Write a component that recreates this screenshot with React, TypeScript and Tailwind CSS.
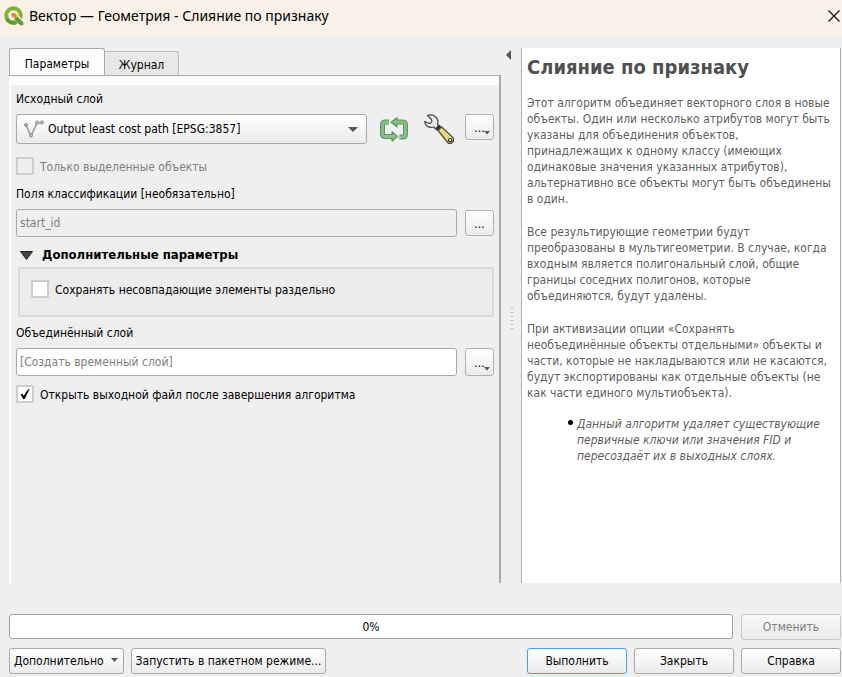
import type { ButtonHTMLAttributes, ReactNode } from 'react'
import clsx from 'clsx'

const buttonBase =
  'rounded-[3px] border bg-linear-to-b from-white to-[#ebebeb] whitespace-nowrap text-center'

function PushButton({
  className,
  primary,
  children,
  ...rest
}: ButtonHTMLAttributes<HTMLButtonElement> & { primary?: boolean; children: ReactNode }) {
  return (
    <button
      type="button"
      className={clsx(
        buttonBase,
        'h-[26px] shrink-0 disabled:border-[#c8c8c8] disabled:from-[#f8f8f8] disabled:text-[#808080]',
        primary ? 'border-[#3fa3ee] to-[#e8f0f7]' : 'border-[#a9a9a9]',
        className,
      )}
      {...rest}
    >
      {children}
    </button>
  )
}

function MoreButton({ label, menu, tall }: { label: string; menu?: boolean; tall?: boolean }) {
  return (
    <button
      type="button"
      aria-label={label}
      className={clsx(
        buttonBase,
        'relative w-[29px] shrink-0 border-[#b0b0b0] pt-[2px]',
        tall ? 'h-[28px]' : 'h-[26px]',
      )}
    >
      ...
      {menu && (
        <svg viewBox="0 0 6 4" className="absolute right-[3px] bottom-[4px] h-[4px] w-[6px]">
          <path d="M0 0h6L3 3.6z" fill="#555" />
        </svg>
      )}
    </button>
  )
}

function CheckBox({
  id,
  label,
  checked,
  disabled,
}: {
  id: string
  label: string
  checked?: boolean
  disabled?: boolean
}) {
  return (
    <div className="flex items-center gap-[6px]">
      <span className="relative flex shrink-0">
        <input
          id={id}
          type="checkbox"
          defaultChecked={checked}
          disabled={disabled}
          className="peer size-[18px] appearance-none border-2 border-[#cdcdcd] bg-white disabled:bg-[#efefef]"
        />
        <svg
          viewBox="0 0 18 18"
          className="pointer-events-none absolute inset-0 hidden size-[18px] peer-checked:block"
        >
          <path d="M4.500 9.500l1.800-.8 1.500 2.300q2-4.500 5-7l.8.500q-2.600 4-4.600 9.300l-1.600.5z" fill="#000" />
        </svg>
      </span>
      <label htmlFor={id} className={clsx('pt-[2px]', disabled ? 'text-[#808080]' : 'text-black')}>
        {label}
      </label>
    </div>
  )
}

function QgisLogo() {
  return (
    <svg viewBox="0 0 20 20" className="size-[20px]" aria-hidden="true">
      <circle cx="9.5" cy="9.500" r="7.300" fill="none" stroke="#84b03a" strokeWidth="4" />
      <path d="M2.800 12.500a7.300 7.300 0 0 0 8.500 4" fill="none" stroke="#5f9a34" strokeWidth="4" />
      <path d="M11 9.500h3.500L21 16v4h-4.500L10 13z" fill="#f9f1e7" />
      <path d="M10.500 10.500h3l5.800 6v2.800h-3L10.500 13.500z" fill="#5b9a38" />
      <path d="M7.200 7h4.300l1.800 1.700v2.200l-2 .8-2.200 0L7.200 10z" fill="#f3b04a" />
      <path d="M7.800 7.600h3l1.500 3.400-3.600-.8z" fill="#ee7022" />
    </svg>
  )
}

function LineLayerIcon() {
  return (
    <svg viewBox="0 0 20 18" className="h-[18px] w-[20px]" aria-hidden="true">
      <path d="M2 5l5 11 6-13h5" fill="none" stroke="#9a9a9a" strokeWidth="1.600" />
      <g fill="#c4c4c4" stroke="#8a8a8a">
        <circle cx="2" cy="5" r="1.500" />
        <circle cx="7" cy="15.500" r="1.500" />
        <circle cx="13" cy="2.500" r="1.500" />
        <circle cx="18" cy="2.500" r="1.500" />
      </g>
    </svg>
  )
}

function IterateIcon() {
  const loop = 'M9 5H5.500Q2.500 5 2.500 8v8.500q0 3 3 3H13M19.500 20h3q3 0 3-3V8q0-3-3-3H15'
  return (
    <svg viewBox="0 0 28 25" className="h-[25px] w-[28px]" aria-hidden="true">
      <path d={loop} fill="none" stroke="#5a9460" strokeWidth="5" />
      <path
        d="M17 .8L11 5.200l6 4.600zM12 14.800l5.500 4.600L12 24.200z"
        fill="#8abf8a"
        stroke="#5a9460"
        strokeWidth="1.200"
        strokeLinejoin="round"
      />
      <path d={loop} fill="none" stroke="#8abf8a" strokeWidth="2.800" />
    </svg>
  )
}

function WrenchIcon() {
  return (
    <svg viewBox="0 0 30 30" className="size-[30px]" aria-hidden="true">
      <path
        d="M3.500 1.500Q7 0 10.500 2q3.500 2.200 3.500 6.500l-.5 2 2.500 2.500-3 3-3.500-3q-3.500 1-6-.5Q1 11 .600 7.500l4 1.800q2 .5 3-1.300.8-2-1-3.500z"
        fill="#ebebeb"
        stroke="#444"
        strokeWidth="1.200"
        strokeLinejoin="round"
      />
      <path d="M11.500 14l3.500-3.500 2.500 2.500-3.500 3.500z" fill="#333" />
      <path d="M14 16.500l3.500-3.700L29.500 24v3L27 29.500h-2.500z" fill="#eed77c" stroke="#444" strokeWidth="1.200" />
      <circle cx="26.200" cy="26.200" r="1.700" fill="#fff" stroke="#333" strokeWidth="1.200" />
    </svg>
  )
}

export default function App() {
  return (
    <div className="flex min-h-screen flex-col bg-[#efefef] font-['DejaVu_Sans_Condensed','DejaVu_Sans',sans-serif] text-[12px] leading-[16px] text-black">
      <header className="flex h-[34px] items-center gap-[5px] bg-[#f9f1e7] pb-[2px] pl-[4px]">
        <QgisLogo />
        <h1 className="flex-1 font-['Noto_Sans','Open_Sans',sans-serif] text-[14px]">
          Вектор — Геометрия - Слияние по признаку
        </h1>
        <button type="button" aria-label="Закрыть окно" className="pr-[2px]">
          <svg viewBox="0 0 12 12" className="size-[12px]">
            <path d="M.5.5l11 11m0-11l-11 11" stroke="#111" strokeWidth="1.200" />
          </svg>
        </button>
      </header>

      <main className="flex flex-1 pt-[14px] pr-px pl-[9px]">
        <section className="flex flex-1 flex-col">
          <div role="tablist" className="flex items-end">
            <button
              type="button"
              role="tab"
              aria-selected="true"
              className="-mb-px h-[28px] w-[96px] rounded-t-[3px] border border-b-0 border-[#a9a9a9] bg-[#fcfcfc] pt-[2px]"
            >
              Параметры
            </button>
            <button
              type="button"
              role="tab"
              aria-selected="false"
              className="h-[24px] w-[74px] rounded-tr-[3px] border border-b-0 border-l-0 border-[#bdbdbd] bg-[#e8e8e8] pt-[2px]"
            >
              Журнал
            </button>
          </div>

          <div role="tabpanel" className="flex-1 border-t border-r-2 border-[#a9a9a9] bg-[#fcfcfc] pt-[9px] pl-[2px]">
            <form className="flex h-full flex-col bg-[#efefef] pt-[6px] pr-[5px] pl-[5px]">
              <label htmlFor="source">Исходный слой</label>
              <div className="mt-[7px] flex">
                <div className="relative flex-1">
                  <select
                    id="source"
                    className={clsx(buttonBase, 'h-[30px] w-full appearance-none border-[#a9a9a9] pl-[31px] text-left')}
                  >
                    <option>Output least cost path [EPSG:3857]</option>
                  </select>
                  <span className="pointer-events-none absolute top-[6px] left-[8px]">
                    <LineLayerIcon />
                  </span>
                  <svg viewBox="0 0 10 5" className="pointer-events-none absolute top-[13px] right-[9px] h-[5px] w-[10px]">
                    <path d="M0 0h10L5 5z" fill="#555" />
                  </svg>
                </div>
                <button type="button" aria-label="Перебрать объекты" className="ml-[13px]">
                  <IterateIcon />
                </button>
                <button type="button" aria-label="Настройки" className="mr-[11px] ml-[16px]">
                  <WrenchIcon />
                </button>
                <MoreButton label="Выбрать слой" menu />
              </div>

              <div className="mt-[13px]">
                <CheckBox id="selected" label="Только выделенные объекты" disabled />
              </div>

              <label htmlFor="fields" className="mt-[11px]">
                Поля классификации [необязательно]
              </label>
              <div className="mt-[7px] flex items-center gap-[8px]">
                <input
                  id="fields"
                  readOnly
                  value="start_id"
                  className="h-[28px] min-w-0 flex-1 rounded-[3px] border border-[#a9a9a9] bg-[#efefef] px-[3px] text-[#808080]"
                />
                <MoreButton label="Выбрать поля" />
              </div>

              <h2 className="mt-[10px]">
                <button type="button" className="flex items-center gap-[9px] pl-[4px] text-[13px] leading-[16px] font-bold">
                  <svg viewBox="0 0 13 9" className="h-[9px] w-[13px]">
                    <path d="M.5.5h12l-6 8z" fill="#444" stroke="#222" />
                  </svg>
                  Дополнительные параметры
                </button>
              </h2>
              <div className="mt-[4px] ml-[2px] h-[50px] rounded-[2px] border-2 border-[#d9d9d9] bg-[#ececec] pt-[11px] pl-[11px]">
                <CheckBox id="disjoint" label="Сохранять несовпадающие элементы раздельно" />
              </div>

              <label htmlFor="output" className="mt-[8px]">
                Объединённый слой
              </label>
              <div className="mt-[7px] flex gap-[8px]">
                <input
                  id="output"
                  placeholder="[Создать временный слой]"
                  className="h-[28px] min-w-0 flex-1 rounded-[3px] border border-[#a9a9a9] bg-white px-[3px] placeholder:text-[#808080]"
                />
                <MoreButton label="Выбрать файл" menu tall />
              </div>

              <div className="mt-[9px]">
                <CheckBox id="open" label="Открыть выходной файл после завершения алгоритма" checked />
              </div>
            </form>
          </div>
        </section>

        <div className="relative w-[20px] shrink-0">
          <button type="button" aria-label="Скрыть справку" className="absolute top-[2px] left-[5px]">
            <svg viewBox="0 0 5 10" className="h-[10px] w-[5px]">
              <path d="M5 0v10L0 5z" fill="#555" />
            </svg>
          </button>
          <div className="absolute top-1/2 left-[10px] h-[21px] w-[2px] -translate-y-2 bg-[repeating-linear-gradient(to_bottom,#b8b8b8_0_1px,transparent_1px_4px)]" />
        </div>

        <aside className="w-[320px] shrink-0 border-x border-[#b0b0b0] bg-white pr-[8px] pl-[5px] text-[#5f5f5f]">
          <h2 className="pt-[6px] text-[20px] leading-[26px] font-bold text-[#505050]">Слияние по признаку</h2>
          <p className="mt-[15px]">
            Этот алгоритм объединяет векторного слоя в новые объекты. Один или несколько атрибутов могут быть указаны
            для объединения объектов, принадлежащих к одному классу (имеющих одинаковые значения указанных атрибутов),
            альтернативно все объекты могут быть объединены в один.
          </p>
          <p className="mt-[17px]">
            Все результирующие геометрии будут преобразованы в мультигеометрии. В случае, когда входным является
            полигональный слой, общие границы соседних полигонов, которые объединяются, будут удалены.
          </p>
          <p className="mt-[17px]">
            При активизации опции «Сохранять необъединённые объекты отдельными» объекты и части, которые не
            накладываются или не касаются, будут экспортированы как отдельные объекты (не как части единого
            мультиобъекта).
          </p>
          <ul className="mt-[15px] pl-[41px] italic">
            <li className="flex gap-[4px]">
              <span className="mt-[4px] size-[5px] shrink-0 rounded-full bg-black" />
              <span>
                Данный алгоритм удаляет существующие первичные ключи или значения FID и пересоздаёт их в выходных слоях.
              </span>
            </li>
          </ul>
        </aside>
      </main>

      <footer className="flex flex-col gap-[8px] pt-[31px] pr-px pb-[3px] pl-[9px]">
        <div className="flex gap-[8px]">
          <div
            role="progressbar"
            aria-valuenow={0}
            aria-label="Ход выполнения"
            className="flex h-[25px] flex-1 items-center justify-center rounded-[3px] border border-[#a0a0a0] bg-white"
          >
            0%
          </div>
          <PushButton disabled className="w-[100px]">Отменить</PushButton>
        </div>
        <div className="flex gap-[7px]">
          <PushButton className="flex w-[115px] items-center gap-[7px] pl-[4px]">
            Дополнительно
            <svg viewBox="0 0 7 6" className="h-[6px] w-[7px]">
              <path d="M0 0h7L3.500 4z" fill="#555" />
            </svg>
          </PushButton>
          <PushButton className="w-[195px]">Запустить в пакетном режиме...</PushButton>
          <div className="flex flex-1 justify-end gap-[7px]">
            <PushButton primary className="w-[100px]">Выполнить</PushButton>
            <PushButton className="w-[100px]">Закрыть</PushButton>
            <PushButton className="w-[100px]">Справка</PushButton>
          </div>
        </div>
      </footer>
    </div>
  )
}
